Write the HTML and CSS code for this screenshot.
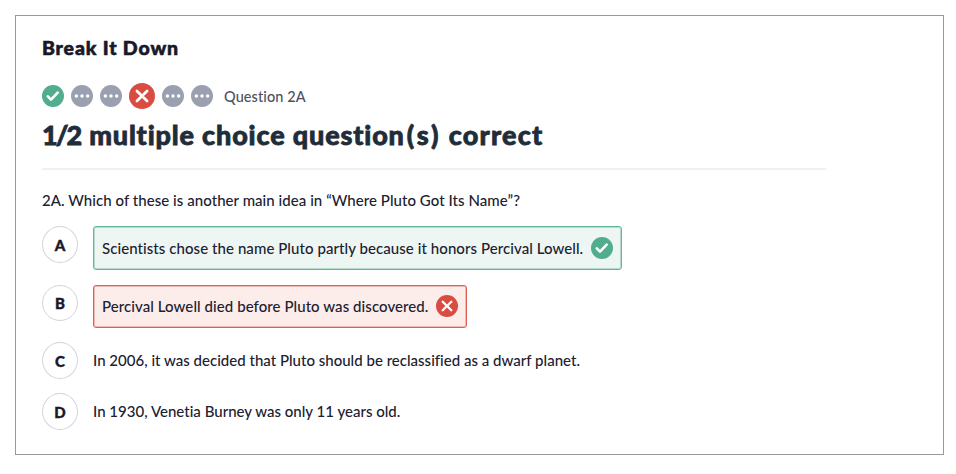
FILE: index.html
```html
<!DOCTYPE html>
<html lang="en">
<head>
<meta charset="utf-8">
<title>Break It Down</title>
<link rel="stylesheet" href="styles.css">
</head>
<body>
<svg class="symbols" aria-hidden="true">
  <symbol id="check" viewBox="0 0 22 22"><circle class="good" cx="11" cy="11" r="11"/><path class="mark" d="M5.8 11.4l3.2 3.2 6.7-6.9"/></symbol>
  <symbol id="cross" viewBox="0 0 22 22"><circle class="bad" cx="11" cy="11" r="11"/><path class="mark thin" d="M6.7 6.7l8.6 8.6M15.3 6.7l-8.6 8.6"/></symbol>
  <symbol id="dots" viewBox="0 0 22 22"><circle class="idle" cx="11" cy="11" r="11"/><circle class="dot" cx="5.4" cy="11" r="1.75"/><circle class="dot" cx="11" cy="11" r="1.75"/><circle class="dot" cx="16.6" cy="11" r="1.75"/></symbol>
</svg>
<main class="card">
  <h1 class="title">Break It Down</h1>
  <div class="progress">
    <svg class="icon"><use href="#check"/></svg>
    <svg class="icon"><use href="#dots"/></svg>
    <svg class="icon"><use href="#dots"/></svg>
    <svg class="icon current"><use href="#cross"/></svg>
    <svg class="icon"><use href="#dots"/></svg>
    <svg class="icon"><use href="#dots"/></svg>
    <span class="label">Question 2A</span>
  </div>
  <h2 class="score"><span class="fraction">1/2</span> multiple choice questio<span class="plural">n(s)</span> <span class="last">correct</span></h2>
  <p class="question">2A. Which of these is another main idea in “Where Pluto Got Its Name”?</p>
  <ul class="options">
    <li class="option boxed"><span class="letter">A</span><div class="answer correct"><span>Scientists chose the name Pluto partly because it honors Percival Lowell.</span><svg class="icon"><use href="#check"/></svg></div></li>
    <li class="option boxed"><span class="letter">B</span><div class="answer wrong"><span>Percival Lowell died before Pluto was discovered.</span><svg class="icon"><use href="#cross"/></svg></div></li>
    <li class="option"><span class="letter">C</span><span class="plain">In 2006, it was decided that Pluto should be reclassified as a dwarf planet.</span></li>
    <li class="option"><span class="letter">D</span><span class="plain">In 1930, Venetia Burney was only 11 years old.</span></li>
  </ul>
</main>
</body>
</html>
```
FILE: styles.css
```css
* { box-sizing: border-box; }
body {
  margin: 0;
  padding: 15px 12px 0 15px;
  background: #fff;
  color: #20202f;
  font: 500 15px/20px Lato, "Noto Sans", sans-serif;
  font-variant-ligatures: none;
  letter-spacing: 0.05px;
}
.symbols { position: absolute; width: 0; height: 0; }
.card {
  height: 440px;
  padding: 20px 26px 0;
  border: 1px solid #999;
}
.title {
  margin: 0;
  color: #18182a;
  font-size: 19.5px;
  font-weight: 900;
  letter-spacing: 0.85px;
  line-height: 24px;
  -webkit-text-stroke: 0.6px;
}
.progress {
  display: flex;
  align-items: center;
  gap: 7px;
  height: 26px;
  margin-top: 23px;
}
.icon { display: block; flex: none; width: 22px; height: 22px; }
.current { width: 26px; height: 26px; }
.label { margin-left: 4px; padding-top: 2px; color: #4f505e; font-size: 14.5px; letter-spacing: 0.1px; }
.score {
  width: 784px;
  height: 61px;
  margin: 0;
  padding-top: 8px;
  border-bottom: 2px solid #edf1f5;
  color: #1f2d3a;
  font-size: 27px;
  font-weight: 900;
  letter-spacing: 0.85px;
  line-height: 36px;
  -webkit-text-stroke: 0.8px;
}
.fraction { letter-spacing: -1.9px; margin-right: 1.5px; }
.plural { letter-spacing: 2.9px; }
.last { letter-spacing: 1.24px; }
.question { margin: 20px 0 16px; }
.options { margin: 0; padding: 0; list-style: none; }
.option { display: flex; align-items: center; gap: 15px; height: 37px; margin-bottom: 14px; }
.boxed { align-items: flex-start; height: 44px; }
.boxed + .boxed { height: 43px; margin-top: 15px; }
.letter {
  flex: none;
  width: 36px;
  height: 37px;
  border: 1px solid #d2d3dd;
  border-radius: 50%;
  color: #18182a;
  font-weight: 900;
  line-height: 36px;
  text-align: center;
  -webkit-text-stroke: 0.4px;
}
.boxed + .boxed .letter { height: 36px; line-height: 35px; }
.plain { padding-bottom: 2px; letter-spacing: 0.01px; }
.answer {
  display: flex;
  align-items: center;
  gap: 8px;
  height: 100%;
  padding: 0 8px;
  border: 1px solid;
  border-radius: 3px;
  letter-spacing: 0.07px;
}
.correct { border-color: #62b699; background: #edf6f3; box-shadow: inset 0 0 0 1px #b5dbcd; }
.wrong { padding-bottom: 1px; border-color: #dc6057; background: #fcecea; box-shadow: inset 0 0 0 1px #f2b8b3; }
.good { fill: #52ad8e; }
.bad { fill: #d94c41; }
.idle { fill: #9ba0b1; }
.dot { fill: #fff; }
.mark { fill: none; stroke: #fff; stroke-width: 2.6; stroke-linecap: round; stroke-linejoin: round; }
.thin { stroke-width: 2.3; }
```
